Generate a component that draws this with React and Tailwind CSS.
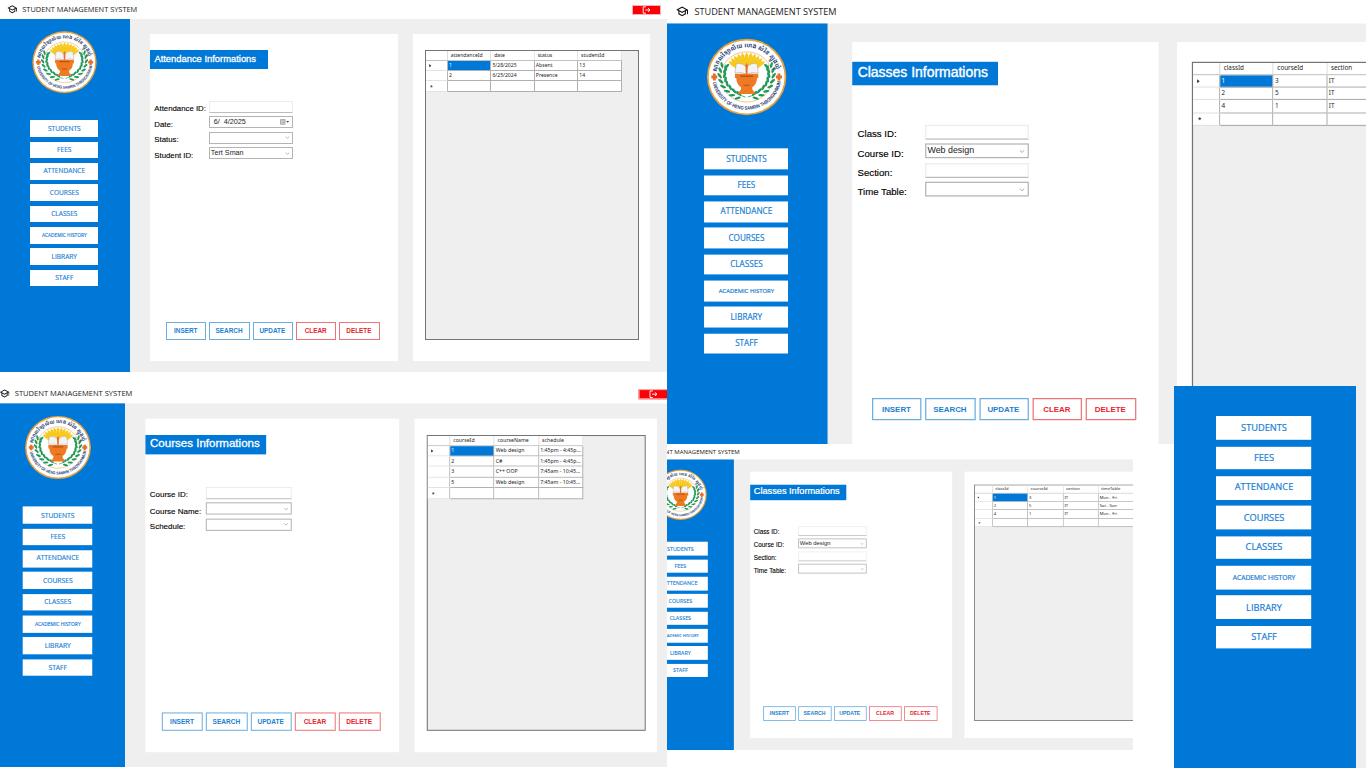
import { MdOutlineSchool } from "react-icons/md";

const NAV = ["STUDENTS", "FEES", "ATTENDANCE", "COURSES", "CLASSES", "ACADEMIC HISTORY", "LIBRARY", "STAFF"];

const ATTENDANCE = {
  title: "Attendance Informations",
  titleSize: "text-[9.4px]",
  fields: [
    { label: "Attendance ID:", kind: "text" },
    { label: "Date:", kind: "date", value: "6/  4/2025" },
    { label: "Status:", kind: "select" },
    { label: "Student ID:", kind: "select", value: "Tert Sman" },
  ],
  columns: ["attendanceId", "date", "status", "studentId"],
  rows: [
    ["1", "5/28/2025", "Absent", "13"],
    ["2", "6/25/2024", "Presence", "14"],
  ],
};

const COURSES = {
  title: "Courses Informations",
  titleSize: "text-[11.3px]",
  fields: [
    { label: "Course ID:", kind: "text" },
    { label: "Course Name:", kind: "select" },
    { label: "Schedule:", kind: "select" },
  ],
  columns: ["courseId", "courseName", "schedule"],
  rows: [
    ["1", "Web design", "1:45pm - 4:45p..."],
    ["2", "C#", "1:45pm - 4:45p..."],
    ["3", "C++ OOP", "7:45am - 10:45..."],
    ["5", "Web design", "7:45am - 10:45..."],
  ],
};

const CLASSES = {
  title: "Classes Informations",
  titleSize: "text-[11.3px]",
  fields: [
    { label: "Class ID:", kind: "text" },
    { label: "Course ID:", kind: "select", value: "Web design" },
    { label: "Section:", kind: "text" },
    { label: "Time Table:", kind: "select" },
  ],
  columns: ["classId", "courseId", "section", "timeTable"],
  rows: [
    ["1", "3", "IT", "Mon - Fri"],
    ["2", "5", "IT", "Sat - Sun"],
    ["4", "1", "IT", "Mon - Fri"],
  ],
};

const LEAVES = [
  [44, 72, 75], [40, 84, 85], [39, 97, 97], [42, 110, 112], [47, 122, 128], [56, 133, 142], [67, 142, 155], [80, 149, 168],
];

function Laurel() {
  return (
    <g fill="#1f9a5b">
      <path d="M47 68 C38 100 50 138 97 152" fill="none" stroke="#1f9a5b" strokeWidth="2" />
      {LEAVES.map(([x, y, a]) => (
        <g key={a} transform={`translate(${x} ${y}) rotate(${-a})`}>
          <ellipse cx="4" cy="-5" rx="8" ry="3.2" transform="rotate(-28)" />
          <ellipse cx="4" cy="5" rx="8" ry="3.2" transform="rotate(28)" />
        </g>
      ))}
    </g>
  );
}

function Logo({ id }) {
  const rays = [-54, -44, -34, -23, -12, 0, 12, 23, 34, 44, 54];
  return (
    <svg className="h-[62.5px] w-[65px]" viewBox="0 0 200 200" preserveAspectRatio="none">
      <defs>
        <path id={`${id}-top`} d="M25 87 A76 76 0 0 1 175 87" />
        <path id={`${id}-bottom`} d="M15 112 A86 86 0 0 0 185 112" />
      </defs>
      <circle cx="100" cy="100" r="99" fill="#e9a03c" />
      <circle cx="100" cy="100" r="94.5" fill="#fff" />
      <circle cx="100" cy="100" r="65" fill="#fff" stroke="#eab676" strokeWidth="2" />
      {rays.map((r) => (
        <path key={r} d="M94 72 L96 34 L100 27 L104 34 L106 72 Z" fill="#f9c81c" transform={`rotate(${r} 100 92) translate(0 9)`} />
      ))}
      <Laurel />
      <g transform="translate(200 0) scale(-1 1)">
        <Laurel />
      </g>
      <path d="M74 66 Q90 62 100 76 Q110 62 126 66 L129 90 Q112 86 100 94 Q88 86 71 90 Z" fill="#f4f4f6" stroke="#9a9db0" strokeWidth="1.2" />
      <path d="M100 64 L103 70 L102 94 H98 L97 70 Z" fill="#e8702a" />
      <path d="M71 92 H129 V103 H126 Q125 120 114 127 V132 L122 144 H78 L86 132 V127 Q75 120 74 103 H71 Z" fill="#ee7a24" />
      <path d="M84 96 H116 V100 H84 Z M92 120 H108 V123 H92 Z" fill="#b95314" />
      <path d="M12 96 h4 v-5 h7 v5 h4 v8 h-4 v5 h-7 v-5 h-4 Z M173 96 h4 v-5 h7 v5 h4 v8 h-4 v5 h-7 v-5 h-4 Z" fill="#e5702c" />
      <text fill="#2b3f78" fontSize="16" fontWeight="700" fontFamily="Noto Sans Khmer, Noto Sans, sans-serif">
        <textPath href={`#${id}-top`} textLength="208" lengthAdjust="spacingAndGlyphs">សាកលវិទ្យាល័យ ហេង សំរិន ត្បូងឃ្មុំ</textPath>
      </text>
      <text fill="#2b3f78" fontSize="13" fontWeight="700" fontFamily="Liberation Sans, sans-serif">
        <textPath href={`#${id}-bottom`} startOffset="2" textLength="242" lengthAdjust="spacingAndGlyphs">UNIVERSITY OF HENG SAMRIN THBONGKHMUM</textPath>
      </text>
    </svg>
  );
}

function Sidebar({ id }) {
  return (
    <aside className="flex w-[130.3px] shrink-0 flex-col items-center bg-[#0078d7] pt-[12.5px] pr-[1.7px]">
      <Logo id={id} />
      <nav className="mt-[26.8px] flex flex-col gap-[4.65px]">
        {NAV.map((item) => (
          <button
            key={item}
            className={`flex h-[16.7px] w-[68.2px] items-center justify-center bg-white font-['Open_Sans',sans-serif] whitespace-nowrap text-[#1a80d6] [-webkit-text-stroke:0.15px] ${item.length > 12 ? "text-[4.8px]" : "text-[6.6px]"}`}
          >
            {item}
          </button>
        ))}
      </nav>
    </aside>
  );
}

function Field({ kind, value }) {
  if (kind === "text") {
    return <span className="mt-[1.2px] h-[11.4px] w-[83.4px] border-[0.8px] border-[#ececec] border-b-[#bdbdbd] bg-white" />;
  }
  return (
    <span className="mt-[0.4px] flex h-[12.2px] w-[83.4px] items-center justify-between border-[0.8px] border-[#b4b4b4] bg-white pr-[1.5px] pl-[0.4px] text-[7.2px] leading-none text-[#222]">
      <span className={kind === "date" ? "pl-[3px] whitespace-pre" : "whitespace-pre pb-[1px]"}>{value}</span>
      {kind === "date" ? (
        <svg className="h-[6px] w-[10px]" viewBox="0 0 10 6">
          <path d="M0.5 0.5h4.6v4.8H0.5z" fill="#d8d8d8" stroke="#8a8a8a" strokeWidth="0.6" />
          <path d="M0.5 2h4.6M0.5 3.6h4.6M2 0.5v4.8M3.6 0.5v4.8" stroke="#9a9a9a" strokeWidth="0.3" />
          <path d="M6.2 2h3L7.7 3.7z" fill="#444" />
        </svg>
      ) : (
        <svg className="h-[3px] w-[5px]" viewBox="0 0 5 3">
          <path d="M0.7 0.6L2.5 2.3L4.3 0.6" fill="none" stroke="#8c8c8c" strokeWidth="0.6" />
        </svg>
      )}
    </span>
  );
}

function Action({ label, danger }) {
  return (
    <button
      className={`flex h-[18.6px] w-[40.4px] items-center justify-center border-[0.9px] bg-white pr-[1px] text-[6.4px] font-bold ${danger ? "border-[#ee7377] text-[#e8222a]" : "border-[#6aaee2] text-[#1b7fd0]"}`}
    >
      {label}
    </button>
  );
}

function FormCard({ page }) {
  return (
    <section className="ml-[19.3px] flex h-[327px] w-[248px] shrink-0 flex-col bg-white pt-4 pb-[20.6px]">
      <h2 className={`flex h-[19px] w-[118.3px] items-center bg-[#0078d7] pl-[4.8px] pb-[1.6px] whitespace-nowrap text-white [-webkit-text-stroke:0.3px] ${page.titleSize}`}>
        {page.title}
      </h2>
      <div className="mt-[31px] flex flex-col pl-[4.7px]">
        {page.fields.map((f) => (
          <div key={f.label} className="flex h-[15.6px] items-start">
            <label className="w-[55.2px] pt-[4.2px] text-[7.8px] leading-[9px] whitespace-nowrap text-black [-webkit-text-stroke:0.12px]">{f.label}</label>
            <Field kind={f.kind} value={f.value} />
          </div>
        ))}
      </div>
      <div className="mt-auto flex gap-[2.9px] pl-[16.5px]">
        <Action label="INSERT" />
        <Action label="SEARCH" />
        <Action label="UPDATE" />
        <Action label="CLEAR" danger />
        <Action label="DELETE" danger />
      </div>
    </section>
  );
}

function GridRow({ marker, cells, selected }) {
  return (
    <div className="flex h-[10.45px]">
      <span className="flex w-[21.4px] items-center border-r-[0.8px] border-b-[0.8px] border-r-[#b5b5b5] border-b-[#e2e2e2] bg-white pl-[2.8px]">
        {marker === "current" && (
          <svg className="h-[3.6px] w-[2.6px]" viewBox="0 0 3 4">
            <path d="M0.3 0L2.7 2L0.3 4z" fill="#333" />
          </svg>
        )}
        {marker === "new" && <b className="pt-[2px] pl-[0.8px] text-[5px] leading-none text-[#333]">*</b>}
      </span>
      {cells.map((c, i) => (
        <span
          key={i}
          className={`w-[43.45px] overflow-hidden border-r-[0.8px] border-b-[0.8px] border-[#b0b0b0] pl-[1.2px] leading-[9.4px] whitespace-nowrap ${selected && i === 0 ? "bg-[#0078d7] text-white" : "bg-white"}`}
        >
          {c}
        </span>
      ))}
    </div>
  );
}

function GridCard({ page }) {
  return (
    <section className="ml-[15.5px] h-[327px] w-[237px] shrink-0 bg-white pt-[16.2px] pl-[12.3px]">
      <div className="flex h-[290px] w-[213.2px] flex-col items-start border border-[#747474] bg-[#efefef] font-['Noto_Sans',sans-serif] text-[5.1px] text-[#1c1c1c]">
        <div className="flex h-[9.4px] border-b-[0.8px] border-[#c2c2c2] bg-white">
          <span className="w-[21.4px] border-r-[0.8px] border-[#dedede]" />
          {page.columns.map((c) => (
            <span key={c} className="w-[43.45px] border-r-[0.8px] border-[#e4e4e4] pl-[3px] leading-[9px]">
              {c}
            </span>
          ))}
        </div>
        {page.rows.map((r, i) => (
          <GridRow key={i} cells={r} selected={i === 0} marker={i === 0 ? "current" : ""} />
        ))}
        <GridRow cells={page.columns.map(() => "")} marker="new" />
      </div>
    </section>
  );
}

function AppWindow({ id, page }) {
  return (
    <div className="flex h-[384px] w-[667px] flex-col font-['Liberation_Sans',sans-serif]">
      <header className="flex h-[18.5px] shrink-0 items-center bg-white pt-[0.8px] pr-[6.5px] pl-[6.6px]">
        <MdOutlineSchool className="h-[10.5px] w-[10.5px] text-[#111]" />
        <h1 className="ml-[5.2px] pt-[0.6px] font-['Open_Sans',sans-serif] text-[7.4px] whitespace-nowrap text-[#222]">STUDENT MANAGEMENT SYSTEM</h1>
        <button className="ml-auto flex h-[10px] w-[28.5px] items-center justify-center border-[0.5px] border-[#ffb0b0] bg-[#fb0007]">
          <svg className="h-[8px] w-[9px]" viewBox="0 0 9 8" fill="none" stroke="#fff" strokeWidth="0.9">
            <path d="M4 0.8H1.2V7.2H4M3.2 4H8M6 2.2L8 4L6 5.8" />
          </svg>
        </button>
      </header>
      <div className="flex grow bg-[#efefef]">
        <Sidebar id={id} />
        <div className="flex pt-[15.5px]">
          <FormCard page={page} />
          <GridCard page={page} />
        </div>
      </div>
    </div>
  );
}

export default function App() {
  return (
    <main className="relative h-[768px] w-[1366px] overflow-hidden bg-white">
      <div className="absolute top-0 left-0 h-[372px] w-[667px] overflow-hidden">
        <AppWindow id="attendance" page={ATTENDANCE} />
      </div>
      <div className="absolute top-[384px] left-0 h-[383px] w-[667px] overflow-hidden">
        <div className="-ml-[7.6px] w-[667px] origin-top-left scale-x-[1.023] scale-y-[1.02]">
          <AppWindow id="courses" page={COURSES} />
        </div>
      </div>
      <div className="absolute top-0 left-[667px] h-[444px] w-[699px] overflow-hidden">
        <div className="w-[667px] origin-top-left scale-x-[1.235] scale-y-[1.236]">
          <AppWindow id="classes" page={CLASSES} />
        </div>
      </div>
      <div className="absolute top-[444px] left-[667px] h-[306px] w-[465.5px] overflow-hidden">
        <div className="-ml-[38.8px] w-[667px] origin-top-left scale-[0.8145]">
          <AppWindow id="classes-small" page={CLASSES} />
        </div>
      </div>
      <div className="absolute top-[386px] left-[1173.7px] h-[382px] w-[192.3px] overflow-hidden">
        <div className="-mt-[138px] w-[667px] origin-top-left scale-[1.4]">
          <AppWindow id="menu" page={CLASSES} />
        </div>
      </div>
    </main>
  );
}
